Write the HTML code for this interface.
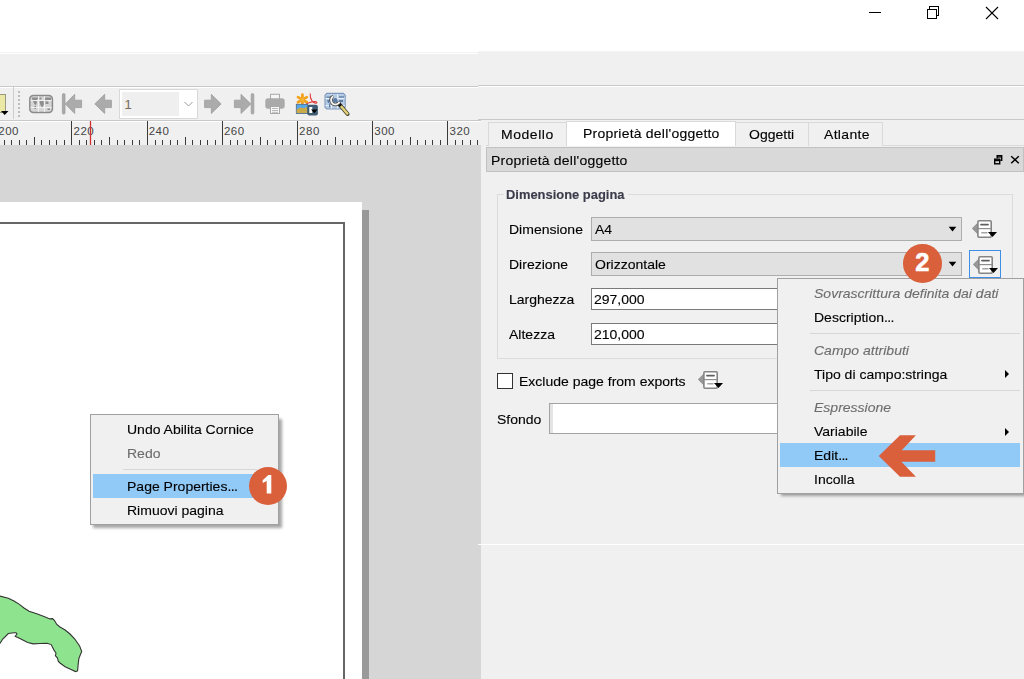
<!DOCTYPE html>
<html><head><meta charset="utf-8">
<style>
*{margin:0;padding:0;box-sizing:border-box}
html,body{width:1024px;height:679px;overflow:hidden;background:#f0f0f0;font-family:"Liberation Sans",sans-serif;font-size:14px;color:#000}
.a{position:absolute}
.t{position:absolute;white-space:nowrap;line-height:18px;font-size:13px;-webkit-text-stroke:0.12px currentColor;transform-origin:0 0;transform:scaleX(1.077)}
#title{left:0;top:0;width:1024px;height:52px;background:#fff}
#canvas{left:0;top:145px;width:481px;height:534px;background:#d6d6d6;overflow:hidden}
</style></head><body>
<!-- title bar -->
<div id="title" class="a"></div>
<div class="a" style="left:0;top:52px;width:478px;height:1px;background:#f2f2f2"></div>
<div class="a" style="left:0;top:53px;width:478px;height:1px;background:#fff"></div>
<div class="a" style="left:478px;top:51px;width:546px;height:1px;background:#f2f2f2"></div>
<div class="a" style="left:0;top:86px;width:478px;height:1px;background:#c9c9c9"></div>
<div class="a" style="left:0;top:87px;width:478px;height:1px;background:#fff"></div>
<div class="a" style="left:478px;top:85px;width:546px;height:1px;background:#c9c9c9"></div>
<div class="a" style="left:478px;top:86px;width:546px;height:1px;background:#fff"></div>
<div class="a" style="left:478px;top:119px;width:546px;height:1px;background:#c9c9c9"></div>
<div class="a" style="left:478px;top:120px;width:546px;height:1px;background:#fff"></div>


<!-- window controls -->
<svg class="a" style="left:860px;top:0" width="164" height="30">
 <g stroke="#000" stroke-width="1" fill="none" shape-rendering="crispEdges">
  <line x1="9" y1="12.5" x2="21" y2="12.5"/>
  <rect x="67.5" y="9.5" width="9" height="9"/>
  <path d="M69.5 9.5 V6.5 H78.5 V15.5 H76.5"/>
 </g>
 <g stroke="#000" stroke-width="1.1" fill="none">
  <line x1="126" y1="7" x2="138" y2="19"/>
  <line x1="138" y1="7" x2="126" y2="19"/>
 </g>
</svg>

<!-- toolbar -->
<svg class="a" style="left:0;top:87px" width="360" height="32">
 <!-- yellow icon -->
 <rect x="-2.5" y="7.5" width="8" height="18" fill="#ece8a6" stroke="#9a9a80" stroke-width="1"/>
 <path d="M1 24 H8.5 L4.7 28 Z" fill="#000"/>
 <line x1="13.5" y1="0" x2="13.5" y2="32" stroke="#cdcdcd"/>
 <g fill="#bcbcbc">
  <rect x="18" y="4" width="2" height="2"/><rect x="18" y="8" width="2" height="2"/><rect x="18" y="12" width="2" height="2"/>
  <rect x="18" y="16" width="2" height="2"/><rect x="18" y="20" width="2" height="2"/><rect x="18" y="24" width="2" height="2"/><rect x="18" y="28" width="2" height="2"/>
 </g>
 <!-- world -->
 <rect x="29.8" y="8.6" width="22.6" height="17" rx="3.5" fill="#d6d6d6" stroke="#8a8a8a" stroke-width="1.5"/>
 <g fill="#8e8e8e">
  <path d="M31.5 10.5 h6.5 v1.5 l-1.5 1 h-4 z"/><path d="M33 13.5 h3 l1 2 l-1.5 3 l-1.5 -2z"/><path d="M34.5 19 h1.5 v3 h-1.5z"/>
  <path d="M39.5 10.5 h2 v2 h-2z"/><path d="M39.5 14 h4 l0.5 3 l-1.5 3 h-1 l-1.5 -3z"/><path d="M44.5 10.5 h6.5 v2.5 h-2 l-1 1.5 h-3z"/><path d="M45.5 15 h3 v2 h-3z"/><path d="M47.5 21.5 h2.5 v1.5 h-2.5z"/>
 </g>
 <g stroke="#f4f4f4" stroke-width="0.9"><line x1="38.5" y1="9.2" x2="38.5" y2="25"/><line x1="44.5" y1="9.2" x2="44.5" y2="25"/><line x1="30.5" y1="13.5" x2="51.8" y2="13.5"/><line x1="30.5" y1="20.5" x2="51.8" y2="20.5"/></g>
 <!-- first -->
 <g fill="#ababab" stroke="#9c9c9c" stroke-width="0.8" stroke-linejoin="round">
  <rect x="62.4" y="6.6" width="2.6" height="20.5" rx="1.3"/>
  <path d="M65.3 16.9 L74.7 7.3 V13.2 H81.6 V20.6 H74.7 V26.5 Z"/>
  <path d="M94.8 16.9 L104.7 7.3 V13.2 H111.4 V20.6 H104.7 V26.5 Z"/>
  <path d="M221.1 16.9 L211.3 7.3 V13.2 H204.6 V20.6 H211.3 V26.5 Z"/>
  <path d="M250.8 16.9 L241 7.3 V13.2 H234.4 V20.6 H241 V26.5 Z"/>
  <rect x="251.2" y="6.6" width="2.6" height="20.5" rx="1.3"/>
 </g>
 <!-- printer -->
 <rect x="270.5" y="7.3" width="9" height="6" fill="#f6f6f6" stroke="#a8a8a8"/>
 <rect x="265.3" y="11.3" width="19.4" height="10.5" rx="2.8" fill="#aaaaaa"/>
 <rect x="270.5" y="19.5" width="9" height="7" fill="#fafafa" stroke="#a8a8a8"/>
 <g stroke="#b0b0b0" stroke-width="0.9"><line x1="272" y1="21.5" x2="278" y2="21.5"/><line x1="272" y1="23.5" x2="278" y2="23.5"/><line x1="272" y1="25.3" x2="278" y2="25.3"/></g>
 <!-- export -->
 <g stroke="#f2a31e" stroke-width="2.8" stroke-linecap="round">
  <line x1="302.4" y1="7.6" x2="302.4" y2="17.8"/><line x1="298" y1="10.1" x2="306.8" y2="15.3"/><line x1="298" y1="15.3" x2="306.8" y2="10.1"/>
 </g>
 <circle cx="302.4" cy="12.7" r="2" fill="#f7b23a"/>
 <path d="M310.2 6.5 C310 9 310.3 11.5 312 13.8 C313.5 15.8 316.5 17 316.8 15.6 C316.8 14.2 313 14.3 309.5 15.6 C307.5 16.4 305.5 17.6 304.5 18.5" fill="none" stroke="#e23c3c" stroke-width="1.1"/>
 <rect x="296.3" y="17.3" width="11.5" height="9.2" fill="#56a8ea" stroke="#4a6886" stroke-width="0.8"/>
 <path d="M296.7 22.6 L300 20.5 L304 21.3 L307.4 19.8 V26.1 H296.7 Z" fill="#c9aa4a"/>
 <rect x="307.3" y="17.8" width="10.6" height="10.7" rx="2" fill="#3f5c74"/>
 <path d="M309.3 20 h3 v6 h-3z" fill="#fff"/>
 <path d="M311 22.5 h6.5 l-3.25 3.8z" fill="#000"/>
 <!-- atlas -->
 <path d="M326.8 6.4 H343.4 L345.2 8.2 V20.2 L343.4 22 H326.8 L325 20.2 V8.2 Z" fill="#b7cbe5" stroke="#7d98bd" stroke-width="1.1"/>
 <g stroke="#e6edf7" stroke-width="1"><line x1="331.5" y1="7" x2="331.5" y2="21.5"/><line x1="337.5" y1="7" x2="337.5" y2="21.5"/><line x1="325.5" y1="11.5" x2="344.8" y2="11.5"/><line x1="325.5" y1="18.5" x2="344.8" y2="18.5"/></g>
 <g fill="#5d7da5"><path d="M326.5 9.5 h4 v1.2 h-4z"/><path d="M339 9.3 h5 v1.3 h-5z"/><path d="M327 13 h3 l-1 3 h-1z"/><path d="M329 16.5 h1.3 v4 h-1.3z"/><path d="M339 13 h4 v2 h-4z"/></g>
 <path d="M340 18 L347.6 27" stroke="#3f3f2a" stroke-width="4" stroke-linecap="round"/>
 <path d="M341 19.3 L347.4 26.6" stroke="#e3d27a" stroke-width="2.4" stroke-linecap="round"/>
 <path d="M338.6 16.6 L340.8 19" stroke="#111" stroke-width="3.2"/>
 <path d="M333.2 9.3 A4.4 4.4 0 1 0 339.5 14.8" fill="none" stroke="#3a3a3a" stroke-width="3.6"/>
 <path d="M333.2 9.3 A4.4 4.4 0 1 0 339.5 14.8" fill="none" stroke="#f2f2f2" stroke-width="2"/>
 <circle cx="335.3" cy="13.2" r="2.3" fill="#5a7ba6"/>
 <!-- combo -->
 <rect x="119.5" y="2.5" width="78" height="29" fill="#fff" stroke="#d9d9d9"/>
 <rect x="122" y="5" width="57" height="24" fill="#efefef"/>
 <path d="M184.5 15 L188.5 19 L192.5 15" fill="none" stroke="#9a9a9a" stroke-width="1"/>
 <text x="124.5" y="22" font-family="Liberation Sans" font-size="13px" fill="#7a6a5a">1</text>
</svg>

<!-- ruler -->
<div class="a" style="left:0;top:120px;width:481px;height:25px;background:#f0f0f0;border-top:1px solid #c9c9c9"></div><div class="a" style="left:0;top:121px;width:481px;height:1px;background:#fff"></div>
<svg class="a" style="left:0;top:120px" width="481" height="25">
 <g stroke="#3a3a3a" stroke-width="1" shape-rendering="crispEdges"><line x1="4.5" y1="20" x2="4.5" y2="25"/><line x1="11.5" y1="20" x2="11.5" y2="25"/><line x1="19.5" y1="20" x2="19.5" y2="25"/><line x1="26.5" y1="20" x2="26.5" y2="25"/><line x1="34.5" y1="17" x2="34.5" y2="25"/><line x1="41.5" y1="20" x2="41.5" y2="25"/><line x1="49.5" y1="20" x2="49.5" y2="25"/><line x1="56.5" y1="20" x2="56.5" y2="25"/><line x1="64.5" y1="20" x2="64.5" y2="25"/><line x1="71.5" y1="1" x2="71.5" y2="25"/><line x1="79.5" y1="20" x2="79.5" y2="25"/><line x1="86.5" y1="20" x2="86.5" y2="25"/><line x1="94.5" y1="20" x2="94.5" y2="25"/><line x1="101.5" y1="20" x2="101.5" y2="25"/><line x1="109.5" y1="17" x2="109.5" y2="25"/><line x1="117.5" y1="20" x2="117.5" y2="25"/><line x1="124.5" y1="20" x2="124.5" y2="25"/><line x1="132.5" y1="20" x2="132.5" y2="25"/><line x1="139.5" y1="20" x2="139.5" y2="25"/><line x1="147.5" y1="1" x2="147.5" y2="25"/><line x1="155.5" y1="20" x2="155.5" y2="25"/><line x1="162.5" y1="20" x2="162.5" y2="25"/><line x1="170.5" y1="20" x2="170.5" y2="25"/><line x1="177.5" y1="20" x2="177.5" y2="25"/><line x1="185.5" y1="17" x2="185.5" y2="25"/><line x1="192.5" y1="20" x2="192.5" y2="25"/><line x1="200.5" y1="20" x2="200.5" y2="25"/><line x1="207.5" y1="20" x2="207.5" y2="25"/><line x1="215.5" y1="20" x2="215.5" y2="25"/><line x1="222.5" y1="1" x2="222.5" y2="25"/><line x1="230.5" y1="20" x2="230.5" y2="25"/><line x1="237.5" y1="20" x2="237.5" y2="25"/><line x1="245.5" y1="20" x2="245.5" y2="25"/><line x1="252.5" y1="20" x2="252.5" y2="25"/><line x1="260.5" y1="17" x2="260.5" y2="25"/><line x1="267.5" y1="20" x2="267.5" y2="25"/><line x1="275.5" y1="20" x2="275.5" y2="25"/><line x1="282.5" y1="20" x2="282.5" y2="25"/><line x1="290.5" y1="20" x2="290.5" y2="25"/><line x1="297.5" y1="1" x2="297.5" y2="25"/><line x1="305.5" y1="20" x2="305.5" y2="25"/><line x1="312.5" y1="20" x2="312.5" y2="25"/><line x1="320.5" y1="20" x2="320.5" y2="25"/><line x1="327.5" y1="20" x2="327.5" y2="25"/><line x1="335.5" y1="17" x2="335.5" y2="25"/><line x1="342.5" y1="20" x2="342.5" y2="25"/><line x1="350.5" y1="20" x2="350.5" y2="25"/><line x1="357.5" y1="20" x2="357.5" y2="25"/><line x1="365.5" y1="20" x2="365.5" y2="25"/><line x1="372.5" y1="1" x2="372.5" y2="25"/><line x1="380.5" y1="20" x2="380.5" y2="25"/><line x1="387.5" y1="20" x2="387.5" y2="25"/><line x1="395.5" y1="20" x2="395.5" y2="25"/><line x1="402.5" y1="20" x2="402.5" y2="25"/><line x1="410.5" y1="17" x2="410.5" y2="25"/><line x1="417.5" y1="20" x2="417.5" y2="25"/><line x1="425.5" y1="20" x2="425.5" y2="25"/><line x1="432.5" y1="20" x2="432.5" y2="25"/><line x1="440.5" y1="20" x2="440.5" y2="25"/><line x1="447.5" y1="1" x2="447.5" y2="25"/><line x1="455.5" y1="20" x2="455.5" y2="25"/><line x1="462.5" y1="20" x2="462.5" y2="25"/><line x1="470.5" y1="20" x2="470.5" y2="25"/><line x1="477.5" y1="20" x2="477.5" y2="25"/></g>
 <g fill="#454545" font-family="Liberation Sans" font-size="11.5px" letter-spacing="0.5"><text x="-1.7" y="15">200</text><text x="73.5" y="15">220</text><text x="148.7" y="15">240</text><text x="223.9" y="15">260</text><text x="299.1" y="15">280</text><text x="374.3" y="15">300</text><text x="449.5" y="15">320</text></g>
 <line x1="90.5" y1="1" x2="90.5" y2="25" stroke="#d03030" stroke-width="1.3"/>
</svg>

<!-- canvas -->
<div id="canvas" class="a">
  <div class="a" style="left:0;top:57px;width:362px;height:500px;background:#fff"></div>
  <div class="a" style="left:362px;top:65px;width:7px;height:500px;background:#999"></div>
  <div class="a" style="left:-2px;top:77px;width:347px;height:500px;border:2px solid #666"></div>
</div>


<!-- puglia -->
<svg class="a" style="left:0;top:0" width="481" height="679">
 <path d="M-2 596 L0 596.1 L8.3 598.2 L14 601 L19.4 604.4 L24 608 L29.1 611.3 L37.4 614.1 L44 616.5 L49.9 618.9 L52.6 618.6 L54.5 620.5 L56.8 624.5 L60 627 L65.1 630 L70 634 L74.8 639 L79.6 645.9 L81.7 651.5 L78.9 658.4 L78.2 664 L77.6 670.9 L75.5 671.6 L70 669 L65.1 666.7 L60 663 L58.2 661.2 L57.5 658 L56 656.5 L55.4 655.6 L56 653 L54 650.1 L51.2 644.6 L47.1 643.2 L40 643.5 L33.2 643.9 L27.7 642.5 L19.4 638.3 L15.2 636.2 L17 634 L16 632.8 L13.9 632.8 L8.3 633.5 L2.8 639 L0 643.2 L-2 644 Z" fill="#8ee38e" stroke="#333" stroke-width="1.1"/>
</svg>
<!-- left context menu -->
<div class="a" style="left:93px;top:419px;width:189px;height:109px;background:rgba(0,0,0,0.35);filter:blur(1.5px)"></div>
<div class="a" style="left:90px;top:414px;width:189px;height:111px;background:#f0f0f0;border:1px solid #a0a0a0"></div>
<div class="a" style="left:123px;top:469px;width:134px;height:1px;background:#d7d7d7"></div>
<div class="a" style="left:93px;top:474px;width:183px;height:24px;background:#91c9f7"></div>
<div class="t" style="left:127px;top:421px">Undo Abilita Cornice</div>
<div class="t" style="left:127px;top:445px;color:#6d6d6d">Redo</div>
<div class="t" style="left:127px;top:478px">Page Properties<span style="letter-spacing:-0.6px">...</span></div>
<div class="t" style="left:127px;top:502px">Rimuovi pagina</div>
<div class="a" style="left:248.8px;top:466.7px;width:38.5px;height:38.5px;border-radius:50%;background:#d9603b"></div><svg class="a" style="left:0;top:0" width="300" height="679"><path d="M262.7 480.3 L268.3 475.1 H271.3 V493.6 H266.7 V480.9 L262.7 483 Z" fill="#fff"/></svg>

<!-- right panel -->
<div class="a" style="left:481px;top:120px;width:543px;height:559px;background:#f0f0f0"></div>
<div class="a" style="left:478px;top:544px;width:546px;height:1px;background:#fff"></div>
<!-- tabs -->
<div class="a" style="left:486px;top:145px;width:538px;height:1px;background:#d9d9d9"></div>
<div class="a" style="left:488px;top:122px;width:79px;height:24px;background:#f0f0f0;border:1px solid #d9d9d9;border-bottom:none"></div>
<div class="a" style="left:566px;top:121px;width:170px;height:25px;background:#fff;border:1px solid #d9d9d9;border-bottom:none"></div>
<div class="a" style="left:735px;top:122px;width:74px;height:24px;background:#f0f0f0;border:1px solid #d9d9d9;border-bottom:none"></div>
<div class="a" style="left:808px;top:122px;width:75px;height:24px;background:#f0f0f0;border:1px solid #d9d9d9;border-bottom:none"></div>
<div class="t" style="left:501px;top:126px;letter-spacing:0.5px">Modello</div>
<div class="t" style="left:583px;top:125px;letter-spacing:0.2px">Proprietà dell'oggetto</div>
<div class="t" style="left:749px;top:126px">Oggetti</div>
<div class="t" style="left:824px;top:126px;letter-spacing:0.3px">Atlante</div>
<!-- dock title -->
<div class="a" style="left:486px;top:147px;width:538px;height:25px;background:#d9d9d9;border:1px solid #c2c2c2"></div>
<div class="t" style="left:491px;top:152px;letter-spacing:0.2px">Proprietà dell'oggetto</div>

<!-- group box -->
<div class="a" style="left:497px;top:194px;width:516px;height:165px;border:1px solid #dcdcdc"></div>
<div class="a" style="left:504px;top:186px;width:124px;height:16px;background:#f0f0f0"></div>
<div class="t" style="left:506px;top:186px;font-weight:bold;font-size:12px;color:#3b3b4b">Dimensione pagina</div>

<div class="t" style="left:509px;top:221px">Dimensione</div>
<div class="t" style="left:509px;top:256px">Direzione</div>
<div class="t" style="left:509px;top:291px">Larghezza</div>
<div class="t" style="left:509px;top:326px">Altezza</div>

<div class="a" style="left:591px;top:217px;width:371px;height:24px;background:#e1e1e1;border:1px solid #adadad"></div>
<div class="t" style="left:595px;top:221px">A4</div>
<div class="a" style="left:591px;top:252px;width:371px;height:24px;background:#e1e1e1;border:1px solid #adadad"></div>
<div class="t" style="left:595px;top:256px">Orizzontale</div>
<div class="a" style="left:591px;top:288px;width:200px;height:22px;background:#fff;border:1px solid #7a7a7a"></div>
<div class="t" style="left:594px;top:291px">297,000</div>
<div class="a" style="left:591px;top:323px;width:200px;height:22px;background:#fff;border:1px solid #7a7a7a"></div>
<div class="t" style="left:594px;top:326px">210,000</div>

<!-- checkbox -->
<div class="a" style="left:497px;top:373px;width:16px;height:16px;background:#fff;border:1px solid #333"></div>
<div class="t" style="left:519px;top:373px">Exclude page from exports</div>
<div class="t" style="left:497px;top:411px">Sfondo</div>
<div class="a" style="left:549px;top:403px;width:240px;height:31px;background:#fff;border:1px solid #a3a3a3"></div><div class="a" style="left:550px;top:404px;width:3px;height:29px;background:#e4e4e4"></div>


<!-- combo arrows & dd buttons -->
<svg class="a" style="left:940px;top:210px" width="84" height="190">
 <path d="M8.7 16.8 H16.3 L12.5 21.4 Z" fill="#000"/>
 <path d="M8.7 51.8 H16.3 L12.5 56.4 Z" fill="#000"/>
</svg>
<div class="a" style="left:969px;top:250px;width:32px;height:28px;border:1px solid #3c8ee6;background:#f0f0f0"></div>

<!-- dd icons -->
<svg class="a" style="left:972px;top:220px" width="26" height="19"><path d="M0.4 8.4 L5.6 3.2 V13.8 Z" fill="#989898" stroke="#7a7a7a" stroke-width="0.7"/>
 <rect x="5.9" y="0.8" width="13.3" height="16.4" rx="1" fill="#fff" stroke="#858585" stroke-width="1.6"/>
 <line x1="5.9" y1="8.6" x2="19.2" y2="8.6" stroke="#8e8e8e" stroke-width="1.2"/>
 <line x1="9" y1="4.6" x2="16" y2="4.6" stroke="#5f5f5f" stroke-width="1.8" stroke-linecap="round"/>
 <line x1="9.3" y1="12.8" x2="15.5" y2="12.8" stroke="#959595" stroke-width="1.3"/>
 <path d="M16 11.9 H25 L20.5 17 Z" fill="#000"/></svg>
<svg class="a" style="left:973px;top:255.5px" width="26" height="19"><path d="M0.4 8.4 L5.6 3.2 V13.8 Z" fill="#989898" stroke="#7a7a7a" stroke-width="0.7"/>
 <rect x="5.9" y="0.8" width="13.3" height="16.4" rx="1" fill="#fff" stroke="#858585" stroke-width="1.6"/>
 <line x1="5.9" y1="8.6" x2="19.2" y2="8.6" stroke="#8e8e8e" stroke-width="1.2"/>
 <line x1="9" y1="4.6" x2="16" y2="4.6" stroke="#5f5f5f" stroke-width="1.8" stroke-linecap="round"/>
 <line x1="9.3" y1="12.8" x2="15.5" y2="12.8" stroke="#959595" stroke-width="1.3"/>
 <path d="M16 11.9 H25 L20.5 17 Z" fill="#000"/></svg>
<svg class="a" style="left:698px;top:371px" width="26" height="19"><path d="M0.4 8.4 L5.6 3.2 V13.8 Z" fill="#989898" stroke="#7a7a7a" stroke-width="0.7"/>
 <rect x="5.9" y="0.8" width="13.3" height="16.4" rx="1" fill="#fff" stroke="#858585" stroke-width="1.6"/>
 <line x1="5.9" y1="8.6" x2="19.2" y2="8.6" stroke="#8e8e8e" stroke-width="1.2"/>
 <line x1="9" y1="4.6" x2="16" y2="4.6" stroke="#5f5f5f" stroke-width="1.8" stroke-linecap="round"/>
 <line x1="9.3" y1="12.8" x2="15.5" y2="12.8" stroke="#959595" stroke-width="1.3"/>
 <path d="M16 11.9 H25 L20.5 17 Z" fill="#000"/></svg>
<!-- dock float/close -->
<svg class="a" style="left:990px;top:150px" width="34" height="20">
 <g fill="none" stroke="#000" stroke-width="1.4">
  <rect x="4.7" y="9.2" width="5" height="4.6"/>
  <path d="M7.2 8.5 V5.7 H11.7 V10.2 H10.3"/>
  <line x1="4.7" y1="10.6" x2="9.7" y2="10.6" stroke-width="1.2"/>
  <line x1="7.2" y1="7" x2="11.7" y2="7" stroke-width="1.2"/>
 </g>
 <g stroke="#000" stroke-width="1.5"><line x1="21.2" y1="6.3" x2="28.8" y2="13.2"/><line x1="28.8" y1="6.3" x2="21.2" y2="13.2"/></g>
</svg>

<!-- badge 2 -->

<!-- popup -->
<div class="a" style="left:781px;top:283px;width:246px;height:213px;background:rgba(0,0,0,0.35);filter:blur(1.5px)"></div>
<div class="a" style="left:777px;top:278px;width:247px;height:216px;background:#f0f0f0;border:1px solid #a0a0a0;border-right:1px solid #a0a0a0"></div>
<div class="t" style="left:814px;top:285px;font-style:italic;color:#6d6d6d">Sovrascrittura definita dai dati</div>
<div class="t" style="left:814px;top:309px">Description<span style="letter-spacing:-0.6px">...</span></div>
<div class="a" style="left:810px;top:333px;width:210px;height:1px;background:#d7d7d7"></div>
<div class="t" style="left:814px;top:342px;font-style:italic;color:#6d6d6d">Campo attributi</div>
<div class="t" style="left:814px;top:366px">Tipo di campo:stringa</div>
<div class="a" style="left:810px;top:390px;width:210px;height:1px;background:#d7d7d7"></div>
<div class="t" style="left:814px;top:399px;font-style:italic;color:#6d6d6d">Espressione</div>
<div class="t" style="left:814px;top:423px">Variabile</div>
<div class="a" style="left:780px;top:443px;width:240px;height:24px;background:#91c9f7"></div>
<div class="t" style="left:814px;top:447px">Edit<span style="letter-spacing:-0.6px">...</span></div>
<div class="t" style="left:814px;top:471px">Incolla</div>
<svg class="a" style="left:1000px;top:365px" width="20" height="80">
 <path d="M5 5 L9 9 L5 13 Z" fill="#000"/>
 <path d="M5 63 L9 67 L5 71 Z" fill="#000"/>
</svg>
<!-- badge 2 -->
<div class="a" style="left:903px;top:244px;width:38.5px;height:38.5px;border-radius:50%;background:#d9603b"></div>
<div class="a" style="left:903px;top:244px;width:38.5px;text-align:center;color:#fff;font-weight:bold;font-size:25.5px;line-height:37px;-webkit-text-stroke:0.6px #fff">2</div>
<!-- red arrow -->
<svg class="a" style="left:870px;top:425px" width="80" height="60">
 <path d="M8.8 30.9 L30 10.2 H45.9 L31.8 25.2 H65.2 V36.7 H31.4 L45.9 51.7 H30 Z" fill="#d9603b"/>
</svg>

</body></html>
